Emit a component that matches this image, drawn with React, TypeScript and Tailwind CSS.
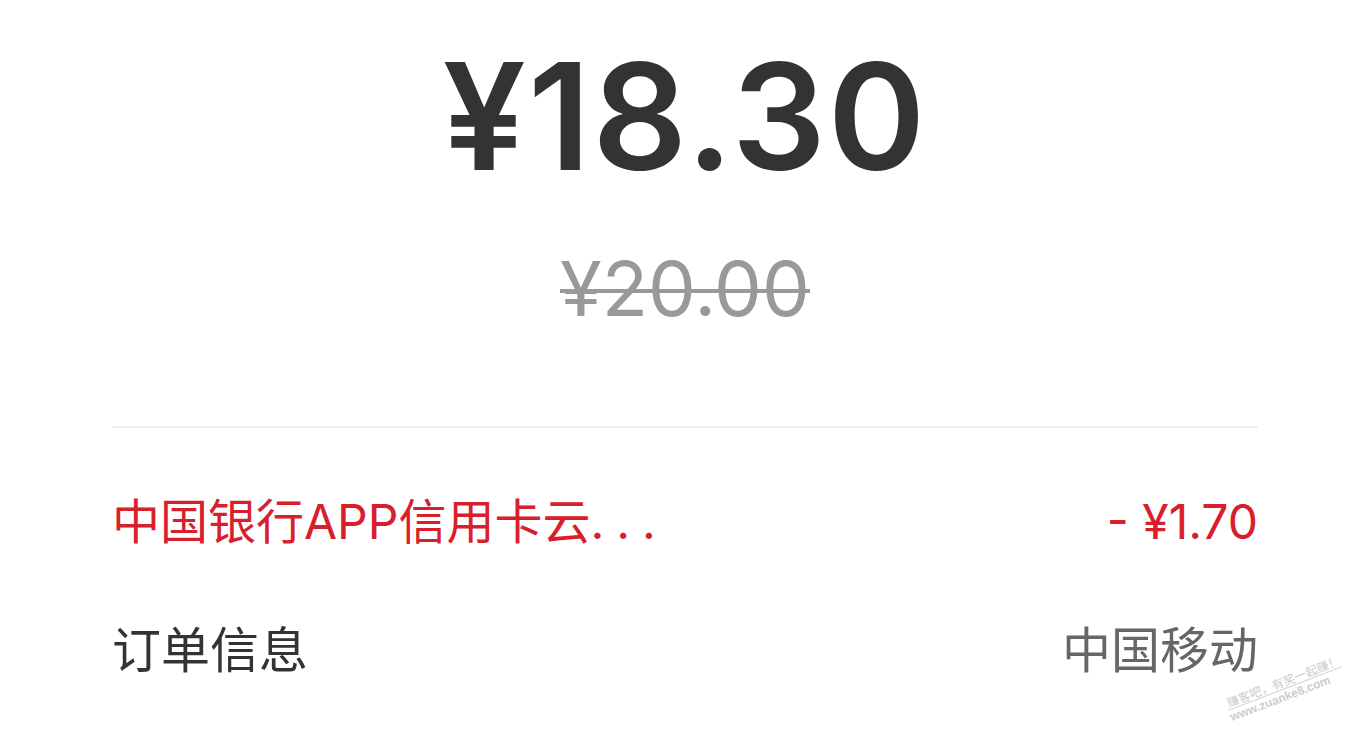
import React from "react";

export default function App() {
  const cjk = { fontFamily: '"Noto Sans CJK SC", "Noto Sans", sans-serif' };
  const num = { fontFamily: 'Inter, "Noto Sans CJK SC", sans-serif' };
  return (
    <div className="relative w-[1370px] h-[735px] overflow-hidden bg-white">
      <div className="flex flex-col items-center pt-[43px]">
        <div
          className="text-[148px] leading-none font-semibold text-[#333333] tracking-[2px]"
          style={num}
        >
          ¥18.30
        </div>
        <div
          className="mt-[59px] text-[76px] leading-none text-[#999999] line-through decoration-[4px]"
          style={num}
        >
          ¥20.00
        </div>
      </div>
      <div className="mx-[112px] mt-[100px] h-[2px] bg-[#f0f0f0]" />
      <div className="mx-[112px] flex items-center justify-between mt-[70px] text-[#d8202c] text-[48px] leading-none" style={num}>
        <span>
          中国银行APP信用卡云<span className="tracking-[12px]">...</span>
        </span>
        <span>- ¥1.70</span>
      </div>
      <div className="mx-[112px] flex items-center justify-between mt-[76px] text-[49px] leading-none" style={cjk}>
        <span className="text-[#333333]">订单信息</span>
        <span className="text-[#666666]">中国移动</span>
      </div>
      <div
        className="absolute left-[1228px] top-[696px] -rotate-[21deg] text-[#cccccc] text-[12px] leading-[14px] origin-left"
        style={cjk}
      >
        <div className="border-b border-[#d6d6d6] pl-[2px]">赚客吧，有奖一起赚！</div>
        <div className="font-semibold" style={{ fontFamily: '"Liberation Sans", sans-serif' }}>www.zuanke8.com</div>
      </div>
    </div>
  );
}
